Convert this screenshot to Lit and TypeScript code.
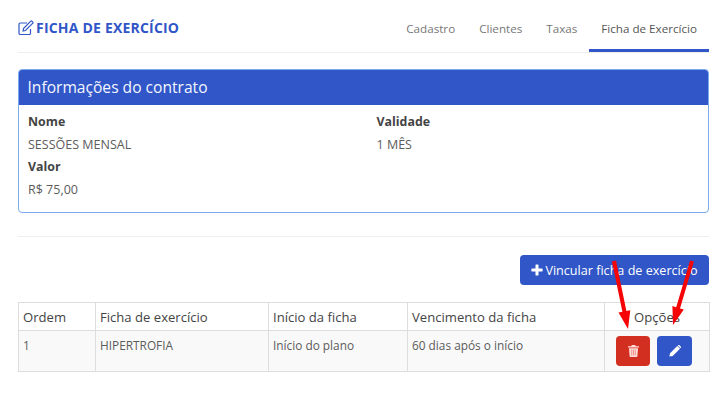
import { LitElement, html, css } from "lit";
import { customElement } from "lit/decorators.js";

@customElement("app-root")
export class AppRoot extends LitElement {
  static styles = css`
    :host {
      display: block;
      position: relative;
      width: 721px;
      height: 400px;
      background: #fff;
      font-family: "Open Sans", sans-serif;
      font-size: 12.5px;
      color: #5c5c5c;
      overflow: hidden;
    }
    .page {
      display: flex;
      flex-direction: column;
      padding: 0 12px 0 18px;
    }
    .top {
      display: flex;
      justify-content: space-between;
      height: 53px;
      border-bottom: 1px solid #eee;
      box-sizing: border-box;
    }
    .title {
      display: flex;
      align-items: center;
      gap: 2px;
      padding-top: 5px;
      height: 50px;
      box-sizing: border-box;
      color: #3056c8;
      font-weight: 700;
      font-size: 14px;
      letter-spacing: 0.2px;
    }
    .tabs {
      display: flex;
      height: 52px;
      box-sizing: border-box;
    }
    .tab {
      padding: 20px 12px 0;
      height: 52px;
      box-sizing: border-box;
      line-height: 18px;
      color: #777;
      font-size: 11.65px;
    }
    .tab.active {
      color: #555;
      border-bottom: 3px solid #3056c8;
    }
    .card {
      margin-top: 16px;
      height: 144px;
      box-sizing: border-box;
      border: 1px solid #7aaaf0;
      border-radius: 4px;
      overflow: hidden;
    }
    .card-head {
      height: 36px;
      margin: -1px -1px 0;
      background: #3056c8;
      color: #f4f6ff;
      font-size: 15.6px;
      line-height: 36px;
      padding-left: 9.5px;
    }
    .card-body {
      display: grid;
      grid-template-columns: 348.5px 1fr;
      padding: 6px 9px;
    }
    .field b {
      display: block;
      font-weight: 700;
      color: #444;
      line-height: 22px;
      font-size: 12.4px;
    }
    .field span {
      display: block;
      line-height: 23px;
    }
    .rule {
      margin-top: 23px;
      margin-bottom: 0;
      border: 0;
      border-top: 1px solid #eee;
      height: 0;
      width: 100%;
    }
    .actions {
      display: flex;
      justify-content: flex-end;
      margin-top: 18px;
    }
    .btn {
      display: flex;
      align-items: center;
      justify-content: center;
      border: 0;
      border-radius: 4px;
      color: #fff;
      font-family: inherit;
      padding: 0;
    }
    .add {
      width: 189px;
      height: 30px;
      gap: 2px;
      background: #3056c8;
      font-size: 12.6px;
    }
    table {
      margin-top: 17px;
      width: 691px;
      height: 69px;
      border-collapse: collapse;
      table-layout: fixed;
    }
    th, td {
      border: 1px solid #ddd;
      padding: 0 4px;
      text-align: left;
      font-weight: 400;
    }
    th {
      height: 27px;
      font-size: 13.1px;
      color: #444;
    }
    td {
      height: 41px;
      vertical-align: top;
      padding-top: 5px;
      line-height: 18px;
      background: #f9f9f9;
      box-sizing: border-box;
      font-size: 11.85px;
      color: #5c5c5c;
    }
    th.center { text-align: center; }
    td.ops { padding: 5px 0 0 11px; }
    .ops-row { display: flex; gap: 7px; }
    .del { width: 34px; height: 30px; background: #d32f20; }
    .edit { width: 35px; height: 30px; background: #3056c8; }
    .arrows {
      position: absolute;
      left: 0;
      top: 0;
      pointer-events: none;
    }
  `;

  render() {
    return html`
      <div class="page">
        <div class="top">
          <div class="title">
            <svg width="16" height="16" viewBox="0 0 16 16" fill="none" stroke="#3056c8" stroke-width="1.2">
              <path d="M12.5 9v4.2a1.3 1.3 0 0 1-1.3 1.3H2.3A1.3 1.3 0 0 1 1 13.2V4.300A1.3 1.3 0 0 1 2.3 3H9" />
              <path d="M5.5 8.5 12.8 1.2a.8.8 0 0 1 1.1 0l.9.9a.8.8 0 0 1 0 1.1L7.5 10.5l-2.4.4z" />
            </svg>
            <span>FICHA DE EXERCÍCIO</span>
          </div>
          <div class="tabs">
            <div class="tab">Cadastro</div>
            <div class="tab">Clientes</div>
            <div class="tab">Taxas</div>
            <div class="tab active">Ficha de Exercício</div>
          </div>
        </div>

        <div class="card">
          <div class="card-head">Informações do contrato</div>
          <div class="card-body">
            <div class="field"><b>Nome</b><span>SESSÕES MENSAL</span></div>
            <div class="field"><b>Validade</b><span>1 MÊS</span></div>
            <div class="field"><b>Valor</b><span>R$ 75,00</span></div>
          </div>
        </div>

        <hr class="rule" />

        <div class="actions">
          <button class="btn add">
            <svg width="12" height="12" viewBox="0 0 12 12" fill="#fff">
              <path d="M4.5 1a.6.6 0 0 1 .6-.6h1.800a.6.6 0 0 1 .6.6v3.500H11a.6.6 0 0 1 .6.6v1.800a.6.6 0 0 1-.6.6H7.500V11a.6.6 0 0 1-.6.6H5.100a.6.6 0 0 1-.6-.6V7.500H1a.6.6 0 0 1-.6-.6V5.100A.6.6 0 0 1 1 4.500h3.500z" />
            </svg>
            <span>Vincular ficha de exercício</span>
          </button>
        </div>

        <table>
          <colgroup>
            <col style="width:77px" />
            <col style="width:173px" />
            <col style="width:139px" />
            <col style="width:197px" />
            <col style="width:105px" />
          </colgroup>
          <thead>
            <tr>
              <th>Ordem</th>
              <th>Ficha de exercício</th>
              <th>Início da ficha</th>
              <th>Vencimento da ficha</th>
              <th class="center">Opções</th>
            </tr>
          </thead>
          <tbody>
            <tr>
              <td>1</td>
              <td>HIPERTROFIA</td>
              <td>Início do plano</td>
              <td>60 dias após o início</td>
              <td class="ops">
                <div class="ops-row">
                  <button class="btn del">
                    <svg width="11" height="12" viewBox="0 0 11 12" fill="#ffdcd8">
                      <path d="M3.800 0h3.400l.6 1.200H11v1.300H0V1.200h3.200zM1 3.300h9l-.6 8a.8.8 0 0 1-.8.700H2.400a.8.800 0 0 1-.8-.7z" />
                      <path d="M3.300 4.500h.9v6h-.9zM5.050 4.500h.9v6h-.9zM6.800 4.500h.9v6h-.9z" fill="#d32f20" opacity=".45" />
                    </svg>
                  </button>
                  <button class="btn edit">
                    <svg width="12" height="12" viewBox="0 0 12 12" fill="#fff">
                      <path d="M8.300 1 11 3.700 3.700 11 .4 11.600 1 8.300zM9.100.3a1 1 0 0 1 1.400 0l1.200 1.200a1 1 0 0 1 0 1.400L11.400 3.300 8.700.6z" />
                    </svg>
                  </button>
                </div>
              </td>
            </tr>
          </tbody>
        </table>
      </div>

      <svg class="arrows" width="721" height="400" viewBox="0 0 721 400" fill="#f50505">
        <path d="M616 260.600 612 261.400 622.400 311.800 618.500 312.600 628 329 630.300 310.200 626.400 311z" />
        <path d="M693.900 261.600 690.100 260.400 676.200 307.200 672.400 306.100 673 325 683.800 309.500 680 308.400z" />
      </svg>
    `;
  }
}
